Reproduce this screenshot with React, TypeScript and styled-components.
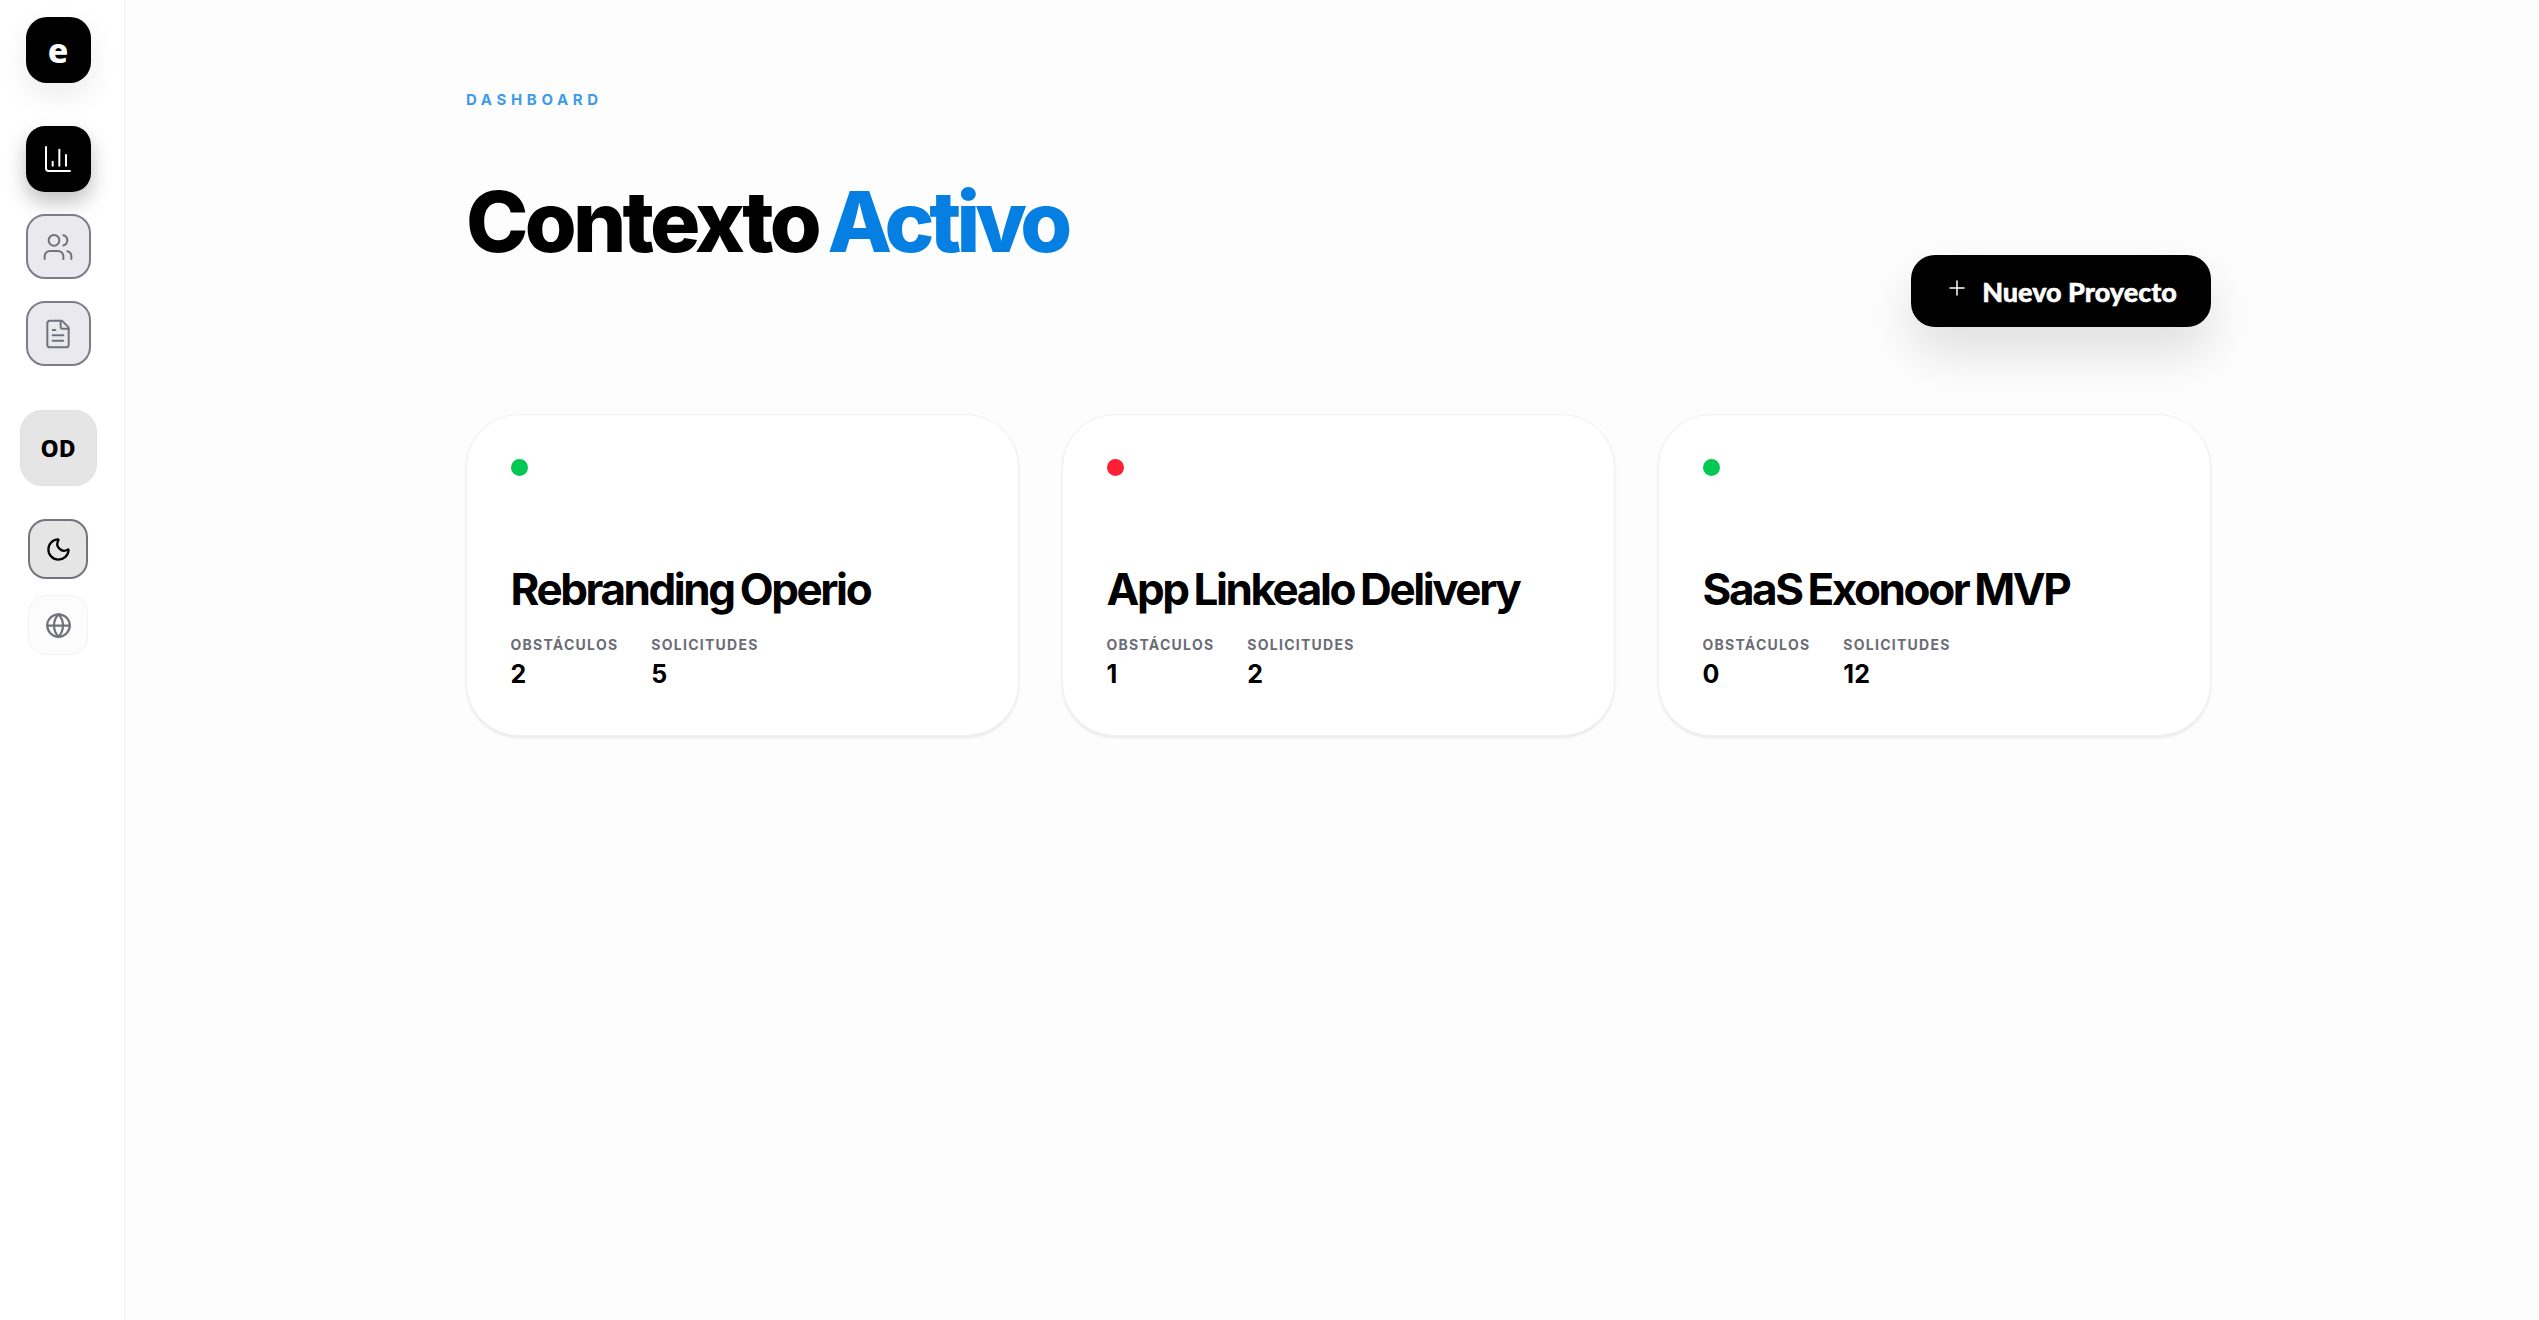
import { BarChart3, FileText, Globe, Moon, Plus, Users } from "lucide-react";
import styled, { createGlobalStyle } from "styled-components";

const projects = [
  { name: "Rebranding Operio", status: "#00c853", obstacles: 2, requests: 5 },
  { name: "App Linkealo Delivery", status: "#ff1f35", obstacles: 1, requests: 2 },
  { name: "SaaS Exonoor MVP", status: "#00c853", obstacles: 0, requests: 12 },
];

export default function App() {
  return (
    <>
      <GlobalStyle />
      <Page>
        <Sidebar>
          <Logo>e</Logo>
          <NavList>
            <NavButton $active>
              <BarChart3 size={32} strokeWidth={1.5} />
            </NavButton>
            <NavButton>
              <Users size={32} strokeWidth={1.5} />
            </NavButton>
            <NavButton>
              <FileText size={32} strokeWidth={1.5} />
            </NavButton>
          </NavList>
          <Avatar>OD</Avatar>
          <ThemeButton>
            <Moon size={27} strokeWidth={2} />
          </ThemeButton>
          <LangButton>
            <Globe size={27} strokeWidth={2} />
          </LangButton>
        </Sidebar>
        <Main>
          <Eyebrow>DASHBOARD</Eyebrow>
          <Header>
            <Title>
              Contexto <span>Activo</span>
            </Title>
            <NewButton>
              <Plus size={24} strokeWidth={1.5} />
              Nuevo Proyecto
            </NewButton>
          </Header>
          <CardGrid>
            {projects.map((p) => (
              <Card key={p.name}>
                <StatusDot $color={p.status} />
                <CardTitle>{p.name}</CardTitle>
                <Stats>
                  <Stat>
                    <StatLabel>OBSTÁCULOS</StatLabel>
                    <StatValue>{p.obstacles}</StatValue>
                  </Stat>
                  <Stat>
                    <StatLabel>SOLICITUDES</StatLabel>
                    <StatValue>{p.requests}</StatValue>
                  </Stat>
                </Stats>
              </Card>
            ))}
          </CardGrid>
        </Main>
      </Page>
    </>
  );
}

const GlobalStyle = createGlobalStyle`
  * {
    box-sizing: border-box;
  }
  html, body {
    margin: 0;
    background: #fdfdfd;
    font-family: "Inter", "Liberation Sans", sans-serif;
  }
`;

const Page = styled("div")`
  display: flex;
  width: 100%;
  height: 1320px;
  overflow: hidden;
`;

const Sidebar = styled("aside")`
  flex: 0 0 125px;
  height: 100%;
  background: #fff;
  border-right: 1px solid #f0f0f2;
  display: flex;
  flex-direction: column;
  align-items: center;
  padding: 17px 8px 0 0;
`;

const Logo = styled("div")`
  width: 65px;
  height: 66px;
  border-radius: 21px;
  background: #000;
  color: #fff;
  font-family: "Noto Sans", sans-serif;
  font-size: 34px;
  font-weight: 800;
  display: flex;
  align-items: center;
  justify-content: center;
  box-shadow: 0 12px 30px rgba(0, 0, 0, 0.08);
`;

const NavList = styled("nav")`
  display: flex;
  flex-direction: column;
  gap: 22px;
  margin-top: 43px;
`;

const NavButton = styled("div")<{ $active?: boolean }>`
  width: 65px;
  height: ${(p) => (p.$active ? "66px" : "65px")};
  border-radius: 19px;
  display: flex;
  align-items: center;
  justify-content: center;
  background: ${(p) => (p.$active ? "#000" : "#e9e9ee")};
  color: ${(p) => (p.$active ? "#fff" : "#71717f")};
  border: ${(p) => (p.$active ? "none" : "2px solid #7d7d8a")};
  box-shadow: ${(p) => (p.$active ? "0 10px 20px rgba(0, 0, 0, 0.25)" : "none")};
`;

const Avatar = styled("div")`
  width: 77px;
  height: 76px;
  margin-top: 44px;
  border-radius: 22px;
  background: #e5e5e5;
  border: 1px solid #e0e0e0;
  color: #000;
  font-family: "Noto Sans", sans-serif;
  font-size: 23px;
  font-weight: 800;
  display: flex;
  align-items: center;
  justify-content: center;
`;

const ThemeButton = styled("div")`
  width: 60px;
  height: 60px;
  margin-top: 33px;
  border-radius: 18px;
  background: #e5e5e5;
  border: 2px solid #74747f;
  color: #000;
  display: flex;
  align-items: center;
  justify-content: center;
`;

const LangButton = styled("div")`
  width: 60px;
  height: 60px;
  margin-top: 16px;
  border-radius: 18px;
  background: #fcfcfc;
  border: 1px solid #f2f2f2;
  color: #71717a;
  display: flex;
  align-items: center;
  justify-content: center;
`;

const Main = styled("main")`
  width: 1745px;
  margin-left: 341px;
  padding-top: 90px;
`;

const Eyebrow = styled("div")`
  color: #3d9be9;
  font-size: 15px;
  font-weight: 700;
  letter-spacing: 0.31em;
  line-height: 20px;
`;

const Header = styled("header")`
  display: flex;
  justify-content: space-between;
  align-items: flex-end;
  margin-top: 62px;
`;

const Title = styled("h1")`
  margin: 0;
  color: #000;
  font-size: 84px;
  font-weight: 800;
  letter-spacing: -0.045em;
  word-spacing: -5px;
  line-height: 100px;
  padding-bottom: 55px;

  span {
    color: #0580e2;
    letter-spacing: -0.06em;
  }
`;

const NewButton = styled("button")`
  width: 300px;
  height: 72px;
  border: none;
  border-radius: 24px;
  background: #000;
  color: #fff;
  font-family: "Lato", "Liberation Sans", sans-serif;
  font-size: 27px;
  font-weight: 900;
  -webkit-text-stroke: 0.5px #fff;
  display: flex;
  align-items: center;
  justify-content: center;
  gap: 13px;
  box-shadow: 0 25px 50px rgba(0, 0, 0, 0.12);

  svg {
    margin-top: -6px;
  }
`;

const CardGrid = styled("section")`
  display: grid;
  grid-template-columns: repeat(3, 1fr);
  gap: 43px;
  margin-top: 87px;
`;

const Card = styled("article")`
  height: 322px;
  padding: 44px 43.5px 0;
  background: #fff;
  border: 1px solid #f1f1f1;
  border-radius: 53px;
  box-shadow: 0 2px 3px rgba(0, 0, 0, 0.08);
`;

const StatusDot = styled("div")<{ $color: string }>`
  width: 17px;
  height: 17px;
  border-radius: 50%;
  background: ${(p) => p.$color};
`;

const CardTitle = styled("h2")`
  margin: 86px 0 0;
  color: #000;
  font-size: 44px;
  font-weight: 700;
  letter-spacing: -0.055em;
  word-spacing: -2px;
  line-height: 54px;
`;

const Stats = styled("div")`
  display: flex;
  gap: 33px;
  margin-top: 20px;
`;

const Stat = styled("div")`
  display: flex;
  flex-direction: column;
  gap: 5px;
`;

const StatLabel = styled("div")`
  color: #6b6b76;
  font-size: 14px;
  font-weight: 700;
  letter-spacing: 0.09em;
  line-height: 18px;
`;

const StatValue = styled("div")`
  color: #000;
  font-size: 25px;
  font-weight: 700;
  line-height: 30px;
`;
